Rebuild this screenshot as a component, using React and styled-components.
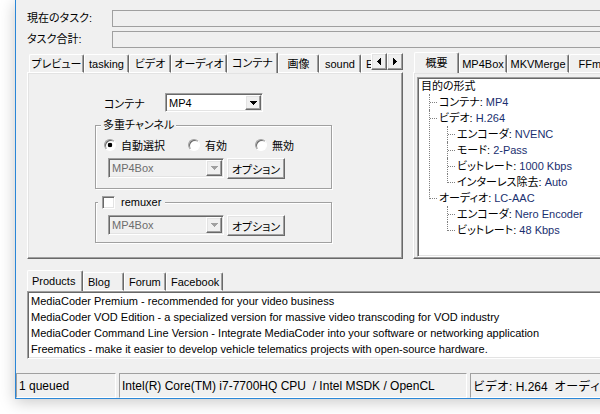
import React from "react";
import styled, { createGlobalStyle, css } from "styled-components";

const GlobalStyle = createGlobalStyle`
  html, body { margin: 0; padding: 0; background: #fff; }
  body {
    font-family: "Liberation Sans", "Noto Sans CJK JP", sans-serif;
    font-size: 11px;
    color: #000;
  }
  #root { width: 600px; height: 414px; overflow: hidden; }
`;

const raised = css`
  border: 1px solid;
  border-color: #fff #696969 #696969 #fff;
  box-shadow: inset -1px -1px 0 #a0a0a0, inset 1px 1px 0 #e3e3e3;
`;

const sunken = css`
  border: 1px solid;
  border-color: #a0a0a0 #fff #fff #a0a0a0;
  box-shadow: inset 1px 1px 0 #696969, inset -1px -1px 0 #e3e3e3;
`;

const Screen = styled.div`
  width: 600px;
  height: 414px;
  box-sizing: border-box;
  padding-left: 15px;
  overflow: hidden;
  background: #fff;
`;

const Window = styled.div`
  width: 640px;
  height: 399px;
  box-sizing: border-box;
  border-left: 1px solid #2b87d7;
  border-bottom: 1px solid #2b87d7;
  background: #f0f0f0;
  box-shadow: 0 3px 15px rgba(0, 0, 0, 0.22);
  display: flex;
  flex-direction: column;
`;

const Body = styled.div`
  flex: 1;
  min-height: 0;
  padding: 10px 10px 0 11px;
  display: flex;
  flex-direction: column;
`;

const FieldGrid = styled.div`
  display: grid;
  grid-template-columns: 85px 1fr;
  row-gap: 4px;
  align-items: center;
`;

const FieldLabel = styled.span`
  font-size: 11px;
  line-height: 17px;
  font-feature-settings: "palt";
  white-space: nowrap;
`;

const ProgressBox = styled.div`
  height: 17px;
  box-sizing: border-box;
  border: 1px solid #a0a0a0;
  background: #f0f0f0;
`;

const Middle = styled.div`
  display: flex;
  gap: 10px;
  height: 207px;
  margin-top: 4px;
`;

const TabControl = styled.div`
  display: flex;
  flex-direction: column;
  width: ${(p) => (p.$w ? `${p.$w}px` : "auto")};
  flex: ${(p) => (p.$w ? "none" : "1")};
  min-width: 0;
`;

const TabStrip = styled.div`
  display: flex;
  align-items: flex-end;
  height: 21px;
  position: relative;
  z-index: 1;
  margin-bottom: ${(p) => (p.$flat ? "0" : "-1px")};
`;

const TabViewport = styled.div`
  flex: 1;
  min-width: 0;
  height: 100%;
  display: flex;
  align-items: flex-end;
  overflow: hidden;
  padding-left: ${(p) => p.$inset || 0}px;
`;

const Tab = styled.div`
  flex-shrink: 0;
  box-sizing: border-box;
  width: ${(p) => p.$w}px;
  height: ${(p) => (p.$active ? 21 : 19)}px;
  border-top: 1px solid #fff;
  border-left: 1px solid #fff;
  border-right: 1px solid #696969;
  border-bottom: ${(p) => (p.$active ? "none" : "1px solid #fff")};
  border-radius: 2px 2px 0 0;
  box-shadow: inset -1px 0 0 #a0a0a0;
  background: #f0f0f0;
  display: flex;
  align-items: center;
  justify-content: ${(p) => (p.$left ? "flex-start" : "center")};
  padding: ${(p) => (p.$left ? "0 0 0 4px" : "0")};
  font-size: 11px;
  line-height: 14px;
  font-feature-settings: "palt";
  white-space: nowrap;
  overflow: hidden;
`;

const ScrollArrows = styled.div`
  display: flex;
  align-self: flex-start;
  margin-top: 1px;
  flex-shrink: 0;
`;

const ArrowButton = styled.div`
  width: 16px;
  height: 17px;
  box-sizing: border-box;
  ${raised};
  background: #f0f0f0;
  display: flex;
  align-items: center;
  justify-content: center;
`;

const Panel = styled.div`
  flex: 1;
  min-height: 0;
  box-sizing: border-box;
  ${raised};
  background: #f0f0f0;
  display: flex;
  flex-direction: column;
  padding: ${(p) => p.$pad || "0"};
`;

const SettingsColumn = styled.div`
  width: 237px;
  margin-left: 67px;
  padding-top: 20px;
  display: flex;
  flex-direction: column;
`;

const ContainerRow = styled.div`
  display: flex;
  align-items: center;
  padding-left: 9px;
`;

const RowLabel = styled.span`
  width: 61px;
  font-size: 11px;
  font-feature-settings: "palt";
`;

const Select = styled.div`
  box-sizing: border-box;
  display: flex;
  width: ${(p) => p.$w}px;
  height: ${(p) => p.$h}px;
  ${sunken};
  padding: 1px;
  background: ${(p) => (p.$disabled ? "#f0f0f0" : "#fff")};
  color: ${(p) => (p.$disabled ? "#6d6d6d" : "#000")};
`;

const SelectValue = styled.span`
  flex: 1;
  display: flex;
  align-items: center;
  padding-left: 2px;
  font-size: 11px;
`;

const DropButton = styled.span`
  width: 16px;
  box-sizing: border-box;
  ${raised};
  background: #f0f0f0;
  display: flex;
  align-items: center;
  justify-content: center;
`;

const Group = styled.fieldset`
  margin: ${(p) => p.$mt}px 0 0 0;
  padding: ${(p) => p.$pad};
  min-width: 0;
  border: 1px solid #a0a0a0;
  box-shadow: inset 1px 1px 0 #fff, 1px 1px 0 #fff;
`;

const GroupLegend = styled.legend`
  padding: 0 2px;
  line-height: 14px;
  font-size: 11px;
  font-feature-settings: "palt";
  background: #f0f0f0;
`;

const CheckLegend = styled(GroupLegend)`
  margin-left: -3px;
  padding: 0 4px;
  display: flex;
  align-items: center;
  gap: 6px;
`;

const CheckBox = styled.span`
  width: 13px;
  height: 13px;
  box-sizing: border-box;
  ${sunken};
  background: #fff;
`;

const RadioRow = styled.div`
  display: grid;
  grid-template-columns: 84px 67px auto;
  align-items: center;
  height: 14px;
  margin-left: 3px;
`;

const RadioItem = styled.label`
  display: flex;
  align-items: center;
  gap: 5px;
  font-size: 11px;
  font-feature-settings: "palt";
  white-space: nowrap;
`;

const RadioDot = styled.span`
  width: 12px;
  height: 12px;
  box-sizing: border-box;
  border-radius: 50%;
  border: 1px solid;
  border-color: #a0a0a0 #fff #fff #a0a0a0;
  box-shadow: inset 1px 1px 0 #696969;
  background: ${(p) =>
    p.$checked ? "radial-gradient(circle, #000 0 2px, #fff 2.6px)" : "#fff"};
`;

const SelectRow = styled.div`
  display: flex;
  align-items: flex-start;
  gap: 3px;
  margin-top: ${(p) => p.$mt}px;
  padding-left: 7px;
`;

const Button = styled.div`
  width: 58px;
  height: 21px;
  box-sizing: border-box;
  ${raised};
  background: #f0f0f0;
  display: flex;
  align-items: center;
  justify-content: center;
  font-size: 11px;
  font-feature-settings: "palt";
`;

const TreeBox = styled.div`
  flex: 1;
  min-height: 0;
  box-sizing: border-box;
  ${sunken};
  background: #fff;
  padding: 0 0 0 3px;
  overflow: hidden;
  font-size: 11px;
  line-height: 16px;
  font-feature-settings: "palt";
`;

const TreeList = styled.ul`
  list-style: none;
  margin: 0 0 0 8px;
  padding: 0;
`;

const TreeItem = styled.li`
  position: relative;
  padding-left: 10px;
  &::before {
    content: "";
    position: absolute;
    left: 0;
    top: 0;
    bottom: 0;
    border-left: 1px dotted #808080;
  }
  &:last-child::before {
    bottom: auto;
    height: 9px;
  }
  &::after {
    content: "";
    position: absolute;
    left: 1px;
    top: 8px;
    width: 7px;
    border-top: 1px dotted #808080;
  }
`;

const TreeRow = styled.div`
  height: 16px;
  white-space: nowrap;
`;

const TreeValue = styled.span`
  color: #1a3070;
`;

const BottomTabs = styled.div`
  display: flex;
  flex-direction: column;
  margin-top: 11px;
`;

const NewsBox = styled.div`
  height: 68px;
  box-sizing: border-box;
  ${sunken};
  background: #fff;
  padding: 1px 0 0 3px;
  font-size: 11px;
  line-height: 16px;
  white-space: nowrap;
  overflow: hidden;
`;

const StatusBar = styled.div`
  height: 25px;
  flex-shrink: 0;
  display: flex;
  gap: 3px;
`;

const StatusPanel = styled.div`
  box-sizing: border-box;
  width: ${(p) => (p.$w ? `${p.$w}px` : "auto")};
  flex: ${(p) => (p.$w ? "none" : "1")};
  border: 1px solid;
  border-color: #a0a0a0 #fff #fff #a0a0a0;
  display: flex;
  align-items: center;
  padding-left: 2px;
  font-size: 12px;
  white-space: pre;
  overflow: hidden;
`;

const Tri = ({ dir, color = "#000" }) => {
  const rects = [];
  if (dir === "down") {
    [7, 5, 3, 1].forEach((w, i) =>
      rects.push(<rect key={i} x={(7 - w) / 2} y={i} width={w} height={1} fill={color} />)
    );
    return (
      <svg width="7" height="4" shapeRendering="crispEdges">
        {rects}
      </svg>
    );
  }
  [1, 3, 5, 7].forEach((h, i) => {
    const x = dir === "left" ? i : 3 - i;
    rects.push(<rect key={i} x={x} y={(7 - h) / 2} width={1} height={h} fill={color} />);
  });
  return (
    <svg width="4" height="7" shapeRendering="crispEdges">
      {rects}
    </svg>
  );
};

const leftTabs = [
  { label: "プレビュー", w: 55 },
  { label: "tasking", w: 45 },
  { label: "ビデオ", w: 42 },
  { label: "オーディオ", w: 56 },
  { label: "コンテナ", w: 51, active: true },
  { label: "画像", w: 41 },
  { label: "sound", w: 42 },
  { label: "Effects", w: 50, left: true },
];

const rightTabs = [
  { label: "概要", w: 45, active: true },
  { label: "MP4Box", w: 48 },
  { label: "MKVMerge", w: 62 },
  { label: "FFmpeg", w: 60 },
];

const bottomTabs = [
  { label: "Products", w: 56, active: true },
  { label: "Blog", w: 41 },
  { label: "Forum", w: 42 },
  { label: "Facebook", w: 57 },
];

const tree = {
  label: "目的の形式",
  children: [
    { label: "コンテナ", value: "MP4" },
    {
      label: "ビデオ",
      value: "H.264",
      children: [
        { label: "エンコーダ", value: "NVENC" },
        { label: "モード", value: "2-Pass" },
        { label: "ビットレート", value: "1000 Kbps" },
        { label: "インターレス除去", value: "Auto" },
      ],
    },
    {
      label: "オーディオ",
      value: "LC-AAC",
      children: [
        { label: "エンコーダ", value: "Nero Encoder" },
        { label: "ビットレート", value: "48 Kbps" },
      ],
    },
  ],
};

const news = [
  "MediaCoder Premium - recommended for your video business",
  "MediaCoder VOD Edition - a specialized version for massive video transcoding for VOD industry",
  "MediaCoder Command Line Version - Integrate MediaCoder into your software or networking application",
  "Freematics - make it easier to develop vehicle telematics projects with open-source hardware.",
];

const TreeNodes = ({ items }) => (
  <TreeList>
    {items.map((n, i) => (
      <TreeItem key={i}>
        <TreeRow>
          {n.label}: <TreeValue>{n.value}</TreeValue>
        </TreeRow>
        {n.children && <TreeNodes items={n.children} />}
      </TreeItem>
    ))}
  </TreeList>
);

const ComboBox = ({ value, w, h, disabled }) => (
  <Select $w={w} $h={h} $disabled={disabled}>
    <SelectValue>{value}</SelectValue>
    <DropButton>
      <Tri dir="down" color={disabled ? "#a0a0a0" : "#000"} />
    </DropButton>
  </Select>
);

export default function App() {
  return (
    <>
      <GlobalStyle />
      <Screen>
        <Window>
          <Body>
            <FieldGrid>
              <FieldLabel>現在のタスク:</FieldLabel>
              <ProgressBox />
              <FieldLabel>タスク合計:</FieldLabel>
              <ProgressBox />
            </FieldGrid>

            <Middle>
              <TabControl $w={376}>
                <TabStrip>
                  <TabViewport $inset={2}>
                    {leftTabs.map((t) => (
                      <Tab key={t.label} $w={t.w} $active={t.active} $left={t.left}>
                        {t.label}
                      </Tab>
                    ))}
                  </TabViewport>
                  <ScrollArrows>
                    <ArrowButton>
                      <Tri dir="left" />
                    </ArrowButton>
                    <ArrowButton>
                      <Tri dir="right" />
                    </ArrowButton>
                  </ScrollArrows>
                </TabStrip>
                <Panel>
                  <SettingsColumn>
                    <ContainerRow>
                      <RowLabel>コンテナ</RowLabel>
                      <ComboBox value="MP4" w={98} h={19} />
                    </ContainerRow>

                    <Group $mt={6} $pad="5px 7px 9px 5px">
                      <GroupLegend>多重チャンネル</GroupLegend>
                      <RadioRow>
                        <RadioItem>
                          <RadioDot $checked />
                          自動選択
                        </RadioItem>
                        <RadioItem>
                          <RadioDot />
                          有効
                        </RadioItem>
                        <RadioItem>
                          <RadioDot />
                          無効
                        </RadioItem>
                      </RadioRow>
                      <SelectRow $mt={7}>
                        <ComboBox value="MP4Box" w={116} h={20} disabled />
                        <Button>オプション</Button>
                      </SelectRow>
                    </Group>

                    <Group $mt={6} $pad="3px 7px 6px 5px">
                      <CheckLegend>
                        <CheckBox />
                        remuxer
                      </CheckLegend>
                      <SelectRow $mt={3}>
                        <ComboBox value="MP4Box" w={116} h={20} disabled />
                        <Button>オプション</Button>
                      </SelectRow>
                    </Group>
                  </SettingsColumn>
                </Panel>
              </TabControl>

              <TabControl>
                <TabStrip>
                  <TabViewport $inset={1}>
                    {rightTabs.map((t) => (
                      <Tab key={t.label} $w={t.w} $active={t.active}>
                        {t.label}
                      </Tab>
                    ))}
                  </TabViewport>
                </TabStrip>
                <Panel $pad="4px 0 1px 3px">
                  <TreeBox>
                    <TreeRow>{tree.label}</TreeRow>
                    <TreeNodes items={tree.children} />
                  </TreeBox>
                </Panel>
              </TabControl>
            </Middle>

            <BottomTabs>
              <TabStrip $flat>
                <TabViewport>
                  {bottomTabs.map((t) => (
                    <Tab key={t.label} $w={t.w} $active={t.active} $left>
                      {t.label}
                    </Tab>
                  ))}
                </TabViewport>
              </TabStrip>
              <NewsBox>
                {news.map((n) => (
                  <div key={n}>{n}</div>
                ))}
              </NewsBox>
            </BottomTabs>
          </Body>

          <StatusBar>
            <StatusPanel $w={100}>1 queued</StatusPanel>
            <StatusPanel $w={348}>Intel(R) Core(TM) i7-7700HQ CPU  / Intel MSDK / OpenCL</StatusPanel>
            <StatusPanel>ビデオ: H.264  オーディオ: LC-AAC</StatusPanel>
          </StatusBar>
        </Window>
      </Screen>
    </>
  );
}
